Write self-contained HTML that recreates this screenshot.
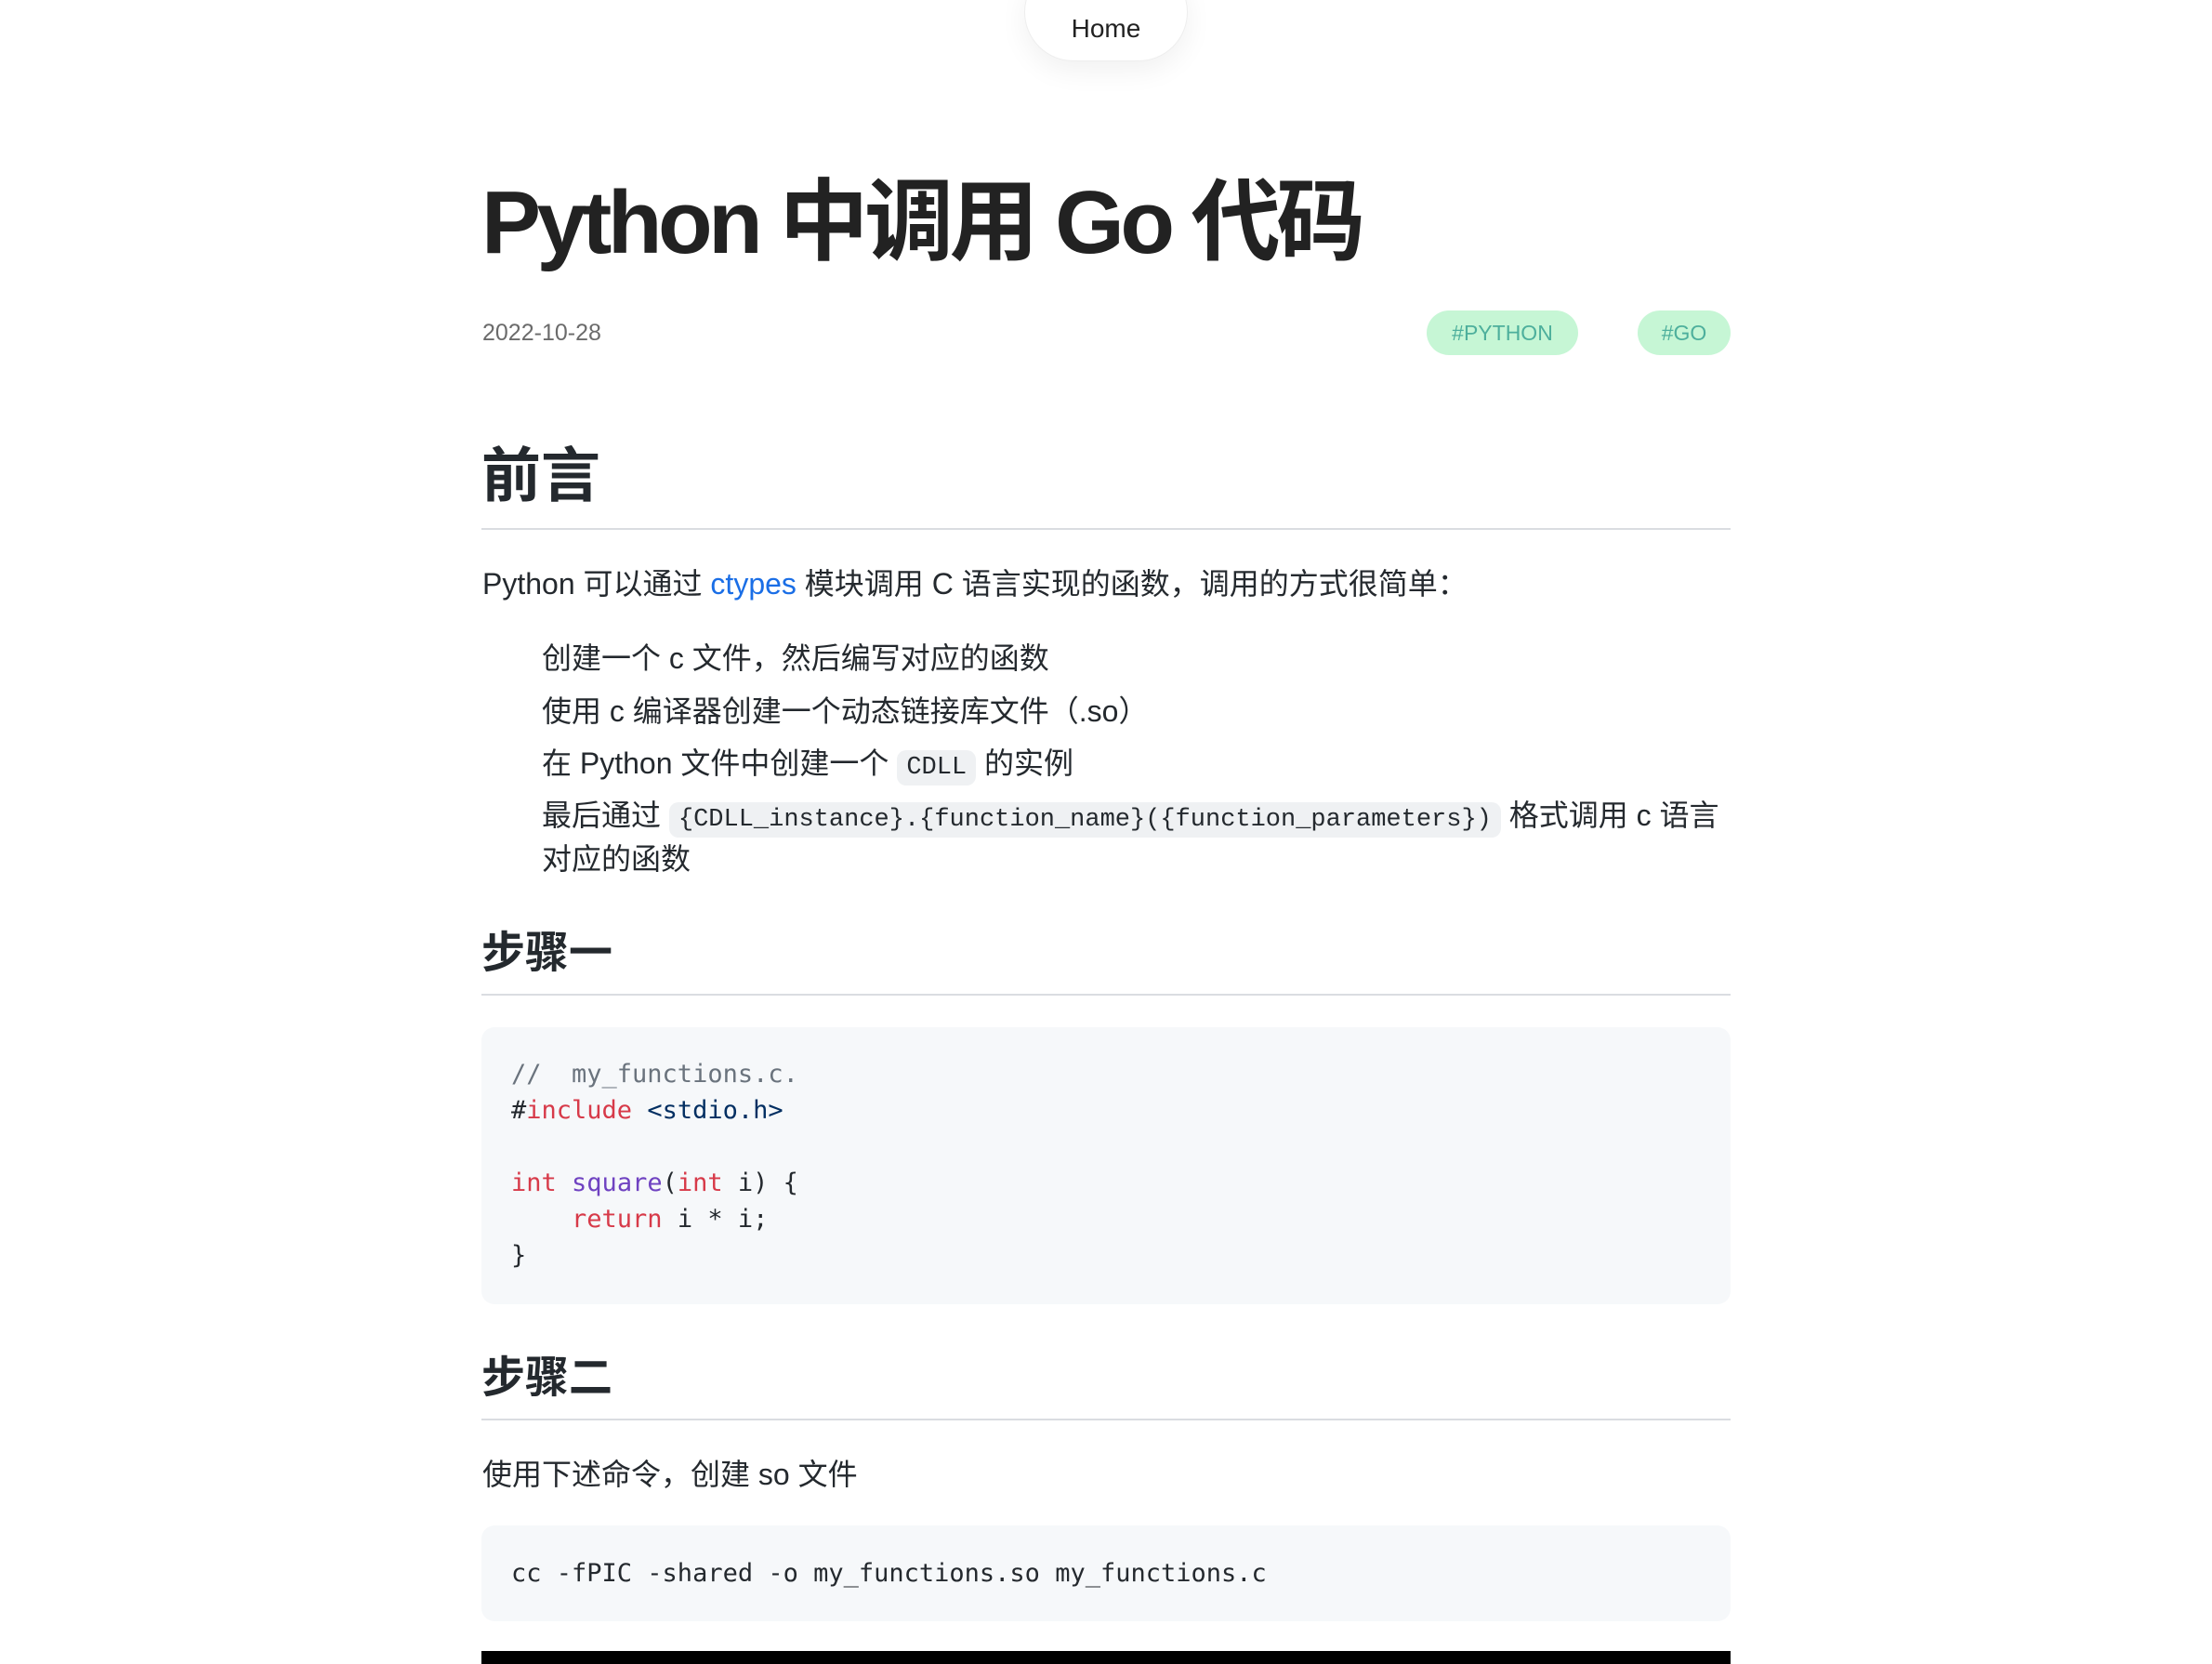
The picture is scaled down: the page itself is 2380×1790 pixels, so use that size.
<!DOCTYPE html>
<html><head><meta charset="utf-8">
<style>
*{margin:0;padding:0;box-sizing:border-box}
body{width:2380px;height:1790px;overflow:hidden;background:#fff;position:relative;font-family:"Liberation Sans","Noto Sans CJK SC",sans-serif;color:#24292e}
.a{position:absolute;white-space:nowrap}
.pill{left:1102px;top:-40px;width:176px;height:106px;border-radius:53px;background:#fff;border:1px solid #eee;box-shadow:0 10px 30px rgba(0,0,0,0.06);text-align:center;padding-top:54px;font-size:28px;color:#222}
.title{left:518px;top:180px;font-size:96px;font-weight:bold;letter-spacing:-4.5px;line-height:120px;color:#222}
.date{left:519px;top:343px;font-size:25px;line-height:30px;color:#6b6b6b}
.tag{top:334px;height:48px;border-radius:24px;background:#c6f6d5;color:#4daf9c;font-size:23px;line-height:48px;text-align:center}
.h{left:518px;width:1344px;font-weight:bold;border-bottom:2px solid #dadde1;color:#24292e}
.p{font-size:32px;line-height:48px;color:#24292e}
code.i{font-family:"Liberation Mono","DejaVu Sans Mono",monospace;font-size:27px;background:#eff1f3;border-radius:10px;padding:4px 10px}
.code{left:518px;width:1344px;background:#f6f8fa;border-radius:14px;font-family:"DejaVu Sans Mono","Liberation Mono",monospace;font-size:27px;line-height:39px;padding-left:32px;white-space:pre;color:#24292e}
.c{color:#6a737d}.k{color:#d73a49}.f{color:#6f42c1}.s{color:#032f62}
</style></head><body>
<div class="a pill">Home</div>
<div class="a title">Python 中调用 Go 代码</div>
<div class="a date">2022-10-28</div>
<div class="a tag" style="left:1535px;width:163px">#PYTHON</div>
<div class="a tag" style="left:1762px;width:100px">#GO</div>

<div class="a h" style="top:470px;height:100px;font-size:64px;line-height:84px">前言</div>
<div class="a p" style="left:519px;top:604px">Python 可以通过 <span style="color:#1a6ee6">ctypes</span> 模块调用 C 语言实现的函数，调用的方式很简单：</div>
<div class="a p" style="left:583px;top:684px">创建一个 c 文件，然后编写对应的函数</div>
<div class="a p" style="left:583px;top:741px">使用 c 编译器创建一个动态链接库文件（.so）</div>
<div class="a p" style="left:583px;top:797px">在 Python 文件中创建一个 <code class="i">CDLL</code> 的实例</div>
<div class="a p" style="left:583px;top:853px">最后通过 <code class="i">{CDLL_instance}.{function_name}({function_parameters})</code> 格式调用 c 语言</div>
<div class="a p" style="left:583px;top:900px">对应的函数</div>

<div class="a h" style="top:994px;height:77px;font-size:47px;line-height:62px">步骤一</div>
<div class="a code" style="top:1105px;height:298px;padding-top:31px"><span class="c">//  my_functions.c.</span>
#<span class="k">include</span> <span class="s">&lt;stdio.h&gt;</span>

<span class="k">int</span> <span class="f">square</span>(<span class="k">int</span> i) {
    <span class="k">return</span> i * i;
}</div>

<div class="a h" style="top:1451px;height:77px;font-size:47px;line-height:62px">步骤二</div>
<div class="a p" style="left:519px;top:1562px">使用下述命令，创建 so 文件</div>
<div class="a code" style="top:1641px;height:103px;line-height:103px">cc -fPIC -shared -o my_functions.so my_functions.c</div>
<div class="a" style="left:518px;top:1776px;width:1344px;height:14px;background:#000"></div>
</body></html>
